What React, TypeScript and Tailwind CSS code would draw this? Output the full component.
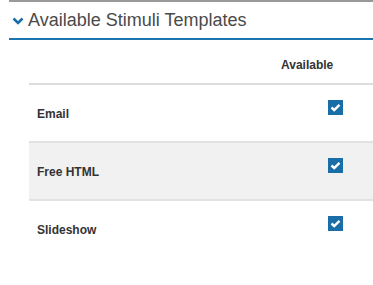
const rows = [
  { name: "Email", shaded: false },
  { name: "Free HTML", shaded: true },
  { name: "Slideshow", shaded: false },
];

function Check() {
  return (
    <span className="inline-flex h-[15px] w-[15px] items-center justify-center bg-[#1a6ea8]">
      <svg width="11" height="9" viewBox="0 0 11 9">
        <path d="M1.5 4.5 L4.2 7 L9.5 1.8" fill="none" stroke="white" strokeWidth="2.4" />
      </svg>
    </span>
  );
}

export default function App() {
  return (
    <div className="h-[285px] w-[373px] bg-white font-['Liberation_Sans',Arial,sans-serif] text-[#333]">
      <div className="ml-[9px] border-t-2 border-[#999]">
        <div className="flex h-[38px] items-center border-b-2 border-[#1a75b0] pl-[3px]">
          <svg width="12" height="8" viewBox="0 0 12 8" className="mr-[4px] mt-[1px]">
            <path d="M1.5 1.5 L6 6 L10.5 1.5" fill="none" stroke="#1a6ea8" strokeWidth="2.6" />
          </svg>
          <h2 className="text-[18px] text-[#4a4a4a]">Available Stimuli Templates</h2>
        </div>
      </div>
      <table className="ml-[29px] mt-[16px] w-[344px] border-collapse text-[12px] font-bold">
        <thead>
          <tr className="border-b-2 border-[#ddd]">
            <th className="h-[27px] pb-[9px]" />
            <th className="w-[100px] pb-[9px] pl-[8px] text-left align-top font-bold">Available</th>
          </tr>
        </thead>
        <tbody>
          {rows.map((r, i) => (
            <tr
              key={r.name}
              className={`${i < rows.length - 1 ? "border-b-2 border-[#e2e2e2]" : ""} ${r.shaded ? "bg-[#f1f1f1]" : ""}`}
            >
              <td className="h-[58px] pl-[8px] pt-[1px]">{r.name}</td>
              <td className="pl-[55px] align-top pt-[14px]">
                <Check />
              </td>
            </tr>
          ))}
        </tbody>
      </table>
    </div>
  );
}
